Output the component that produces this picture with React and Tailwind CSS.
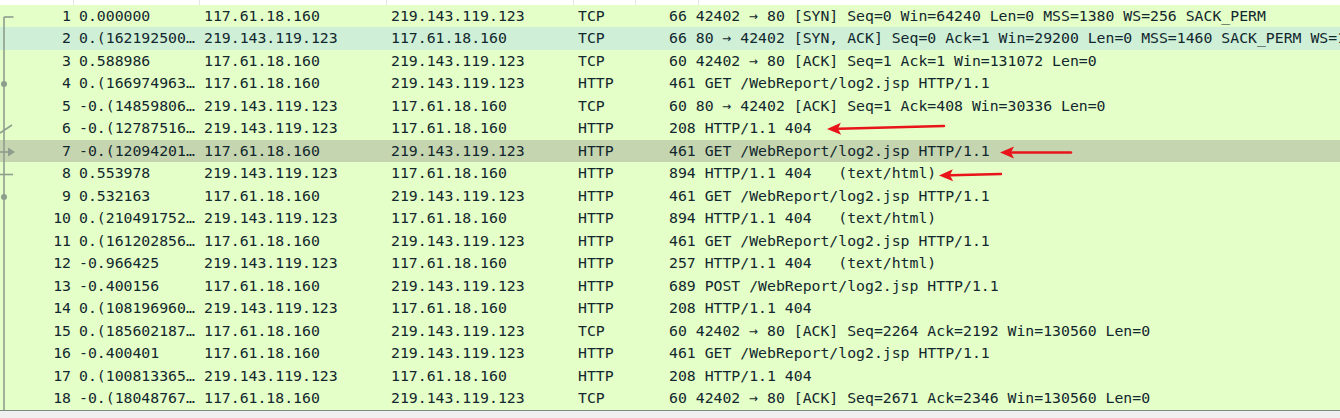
import React from "react";

const rows = [
  ["1", "0.000000", "117.61.18.160", "219.143.119.123", "TCP", "66 42402 → 80 [SYN] Seq=0 Win=64240 Len=0 MSS=1380 WS=256 SACK_PERM"],
  ["2", "0.(162192500…", "219.143.119.123", "117.61.18.160", "TCP", "66 80 → 42402 [SYN, ACK] Seq=0 Ack=1 Win=29200 Len=0 MSS=1460 SACK_PERM WS=128"],
  ["3", "0.588986", "117.61.18.160", "219.143.119.123", "TCP", "60 42402 → 80 [ACK] Seq=1 Ack=1 Win=131072 Len=0"],
  ["4", "0.(166974963…", "117.61.18.160", "219.143.119.123", "HTTP", "461 GET /WebReport/log2.jsp HTTP/1.1"],
  ["5", "-0.(14859806…", "219.143.119.123", "117.61.18.160", "TCP", "60 80 → 42402 [ACK] Seq=1 Ack=408 Win=30336 Len=0"],
  ["6", "-0.(12787516…", "219.143.119.123", "117.61.18.160", "HTTP", "208 HTTP/1.1 404"],
  ["7", "-0.(12094201…", "117.61.18.160", "219.143.119.123", "HTTP", "461 GET /WebReport/log2.jsp HTTP/1.1"],
  ["8", "0.553978", "219.143.119.123", "117.61.18.160", "HTTP", "894 HTTP/1.1 404   (text/html)"],
  ["9", "0.532163", "117.61.18.160", "219.143.119.123", "HTTP", "461 GET /WebReport/log2.jsp HTTP/1.1"],
  ["10", "0.(210491752…", "219.143.119.123", "117.61.18.160", "HTTP", "894 HTTP/1.1 404   (text/html)"],
  ["11", "0.(161202856…", "117.61.18.160", "219.143.119.123", "HTTP", "461 GET /WebReport/log2.jsp HTTP/1.1"],
  ["12", "-0.966425", "219.143.119.123", "117.61.18.160", "HTTP", "257 HTTP/1.1 404   (text/html)"],
  ["13", "-0.400156", "117.61.18.160", "219.143.119.123", "HTTP", "689 POST /WebReport/log2.jsp HTTP/1.1"],
  ["14", "0.(108196960…", "219.143.119.123", "117.61.18.160", "HTTP", "208 HTTP/1.1 404"],
  ["15", "0.(185602187…", "117.61.18.160", "219.143.119.123", "TCP", "60 42402 → 80 [ACK] Seq=2264 Ack=2192 Win=130560 Len=0"],
  ["16", "-0.400401", "117.61.18.160", "219.143.119.123", "HTTP", "461 GET /WebReport/log2.jsp HTTP/1.1"],
  ["17", "0.(100813365…", "219.143.119.123", "117.61.18.160", "HTTP", "208 HTTP/1.1 404"],
  ["18", "-0.(18048767…", "117.61.18.160", "219.143.119.123", "TCP", "60 42402 → 80 [ACK] Seq=2671 Ack=2346 Win=130560 Len=0"],
];

function rowBg(i) {
  if (i === 1) return "bg-[#cfefd6]";
  if (i === 6) return "bg-[#c5d5af]";
  return "bg-[#e4ffc7]";
}

function Arrow({ x1, y1, x2, y2 }) {
  // tail (x1,y1) -> head tip (x2,y2)
  const dx = x2 - x1;
  const dy = y2 - y1;
  const len = Math.hypot(dx, dy);
  const ux = dx / len;
  const uy = dy / len;
  const hl = 14;
  const hw = 6;
  const bx = x2 - ux * hl;
  const by = y2 - uy * hl;
  const px = -uy;
  const py = ux;
  return (
    <g>
      <line x1={x1} y1={y1} x2={bx + ux * 2} y2={by + uy * 2} stroke="#e8141a" strokeWidth="2.4" strokeLinecap="round" />
      <polygon
        points={`${x2},${y2} ${bx + px * hw},${by + py * hw} ${bx + ux * 3},${by + uy * 3} ${bx - px * hw},${by - py * hw}`}
        fill="#e8141a"
      />
    </g>
  );
}

export default function App() {
  return (
    <div
      className="relative w-[1340px] h-[418px] overflow-hidden bg-[#f0f0f0] text-[#12272e]"
      style={{ fontFamily: '"DejaVu Sans Mono", monospace' }}
    >
      <div className="flex h-[4.5px] bg-white">
        <div className="w-[74px] border-r border-[#e5e5e5]" />
        <div className="w-[126px] border-r border-[#e5e5e5]" />
        <div className="w-[187px] border-r border-[#e5e5e5]" />
        <div className="w-[187px] border-r border-[#e5e5e5]" />
        <div className="w-[62px] border-r border-[#e5e5e5]" />
        <div className="w-[63px] border-r border-[#e5e5e5]" />
        <div className="flex-1" />
      </div>
      <div className="flex flex-col border-b border-[#7d8a80]">
        {rows.map((r, i) => (
          <div
            key={i}
            className={`flex items-center h-[22.5px] text-[14.8px] leading-[22px] whitespace-pre ${rowBg(i)}`}
          >
            <div className="w-[74px] shrink-0 text-right pr-[3px]">{r[0]}</div>
            <div className="w-[126px] shrink-0 pl-[5px] overflow-hidden">{r[1]}</div>
            <div className="w-[187px] shrink-0 pl-[4px] overflow-hidden">{r[2]}</div>
            <div className="w-[187px] shrink-0 pl-[4px] overflow-hidden">{r[3]}</div>
            <div className="w-[95px] shrink-0 pl-[4px] overflow-hidden">{r[4]}</div>
            <div className="flex-1 overflow-hidden">{r[5]}</div>
          </div>
        ))}
      </div>

      <svg className="absolute left-0 top-0 pointer-events-none" width="1340" height="418" viewBox="0 0 1340 418">
        {/* related packet tree */}
        <g stroke="#8e9e8e" strokeWidth="1.6" fill="none">
          <line x1="4" y1="17" x2="4" y2="410" />
          <line x1="4" y1="17" x2="13.5" y2="17" />
          <line x1="0" y1="133" x2="12" y2="125" />
          <line x1="0" y1="152" x2="9" y2="152" />
          <line x1="0" y1="174.5" x2="13" y2="174.5" />
        </g>
        <polygon points="8,147.5 15,152 8,156.5" fill="#8e9e8e" />
        <circle cx="4" cy="84" r="3" fill="#8e9e8e" />
        <circle cx="4" cy="197" r="3" fill="#8e9e8e" />

        {/* red annotation arrows */}
        <Arrow x1={944} y1={126} x2={827} y2={129} />
        <Arrow x1={1071} y1={152.5} x2={1000} y2={152.5} />
        <Arrow x1={1001} y1={174} x2={939} y2={175.5} />
      </svg>
    </div>
  );
}
